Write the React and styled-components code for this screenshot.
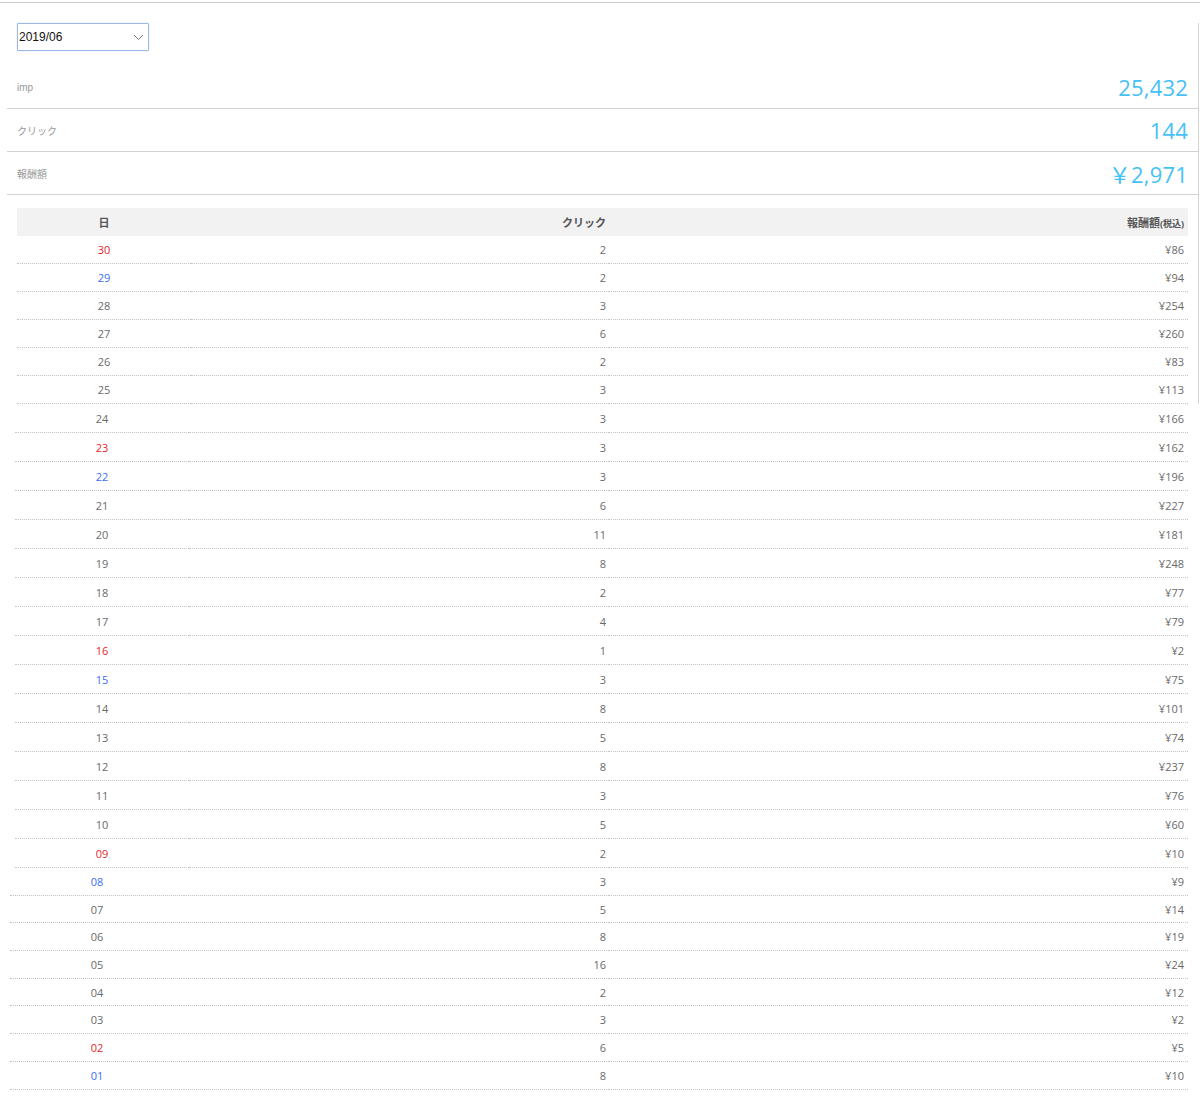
import React from "react";
import styled, { createGlobalStyle } from "styled-components";

const Global = createGlobalStyle`
  html, body { margin: 0; padding: 0; background: #fff; }
  body { font-family: "Open Sans", "Noto Sans CJK JP", sans-serif; color: #666; }
`;

const Page = styled.div`
  margin-top: 2px;
  border-top: 1px solid #cfcfcf;
  width: 1200px;
`;

const Upper = styled.div`
  margin-left: 7px;
  width: 1191px;
  border-right: 1px solid #d4d4d4;
`;

const SelectWrap = styled.label`
  position: relative;
  display: block;
  margin: 20px 0 0 10px;
  width: 132px;
  height: 28px;
  box-sizing: border-box;
`;

const Select = styled.select`
  appearance: none;
  width: 100%;
  height: 100%;
  box-sizing: border-box;
  border: 1px solid #9db9e6;
  border-radius: 1px;
  background: #fff;
  box-shadow: 0 0 2px rgba(120, 160, 220, 0.35);
  padding: 0 0 0 1px;
  font-family: "Liberation Sans", Arial, sans-serif;
  font-size: 12px;
  color: #111;
  outline: none;
`;

const Chevron = styled.svg`
  position: absolute;
  right: 5px;
  top: 11px;
  pointer-events: none;
`;

const Summary = styled.div`
  margin-top: 15px;
`;

const SummaryRow = styled.div`
  height: 42px;
  border-bottom: 1px solid #d2d2d2;
  display: flex;
  align-items: center;
  justify-content: space-between;
  padding: 0 10px;
`;

const SummaryLabel = styled.span`
  font-family: "Liberation Sans", "Noto Sans CJK JP", sans-serif;
  font-size: 10px;
  color: #999;
`;

const SummaryValue = styled.span`
  font-family: "Open Sans", "Noto Sans CJK JP", sans-serif;
  font-size: 22px;
  color: #45c1f6;
  letter-spacing: 0.2px;
`;

const TableHead = styled.div`
  margin: 13px 10px 0 10px;
  height: 28px;
  background: #f2f2f2;
  display: grid;
  grid-template-columns: 174px 1fr 579px;
  align-items: center;
  font-size: 11px;
  font-weight: 700;
  color: #555;
`;

const HeadCell = styled.div`
  text-align: ${(p) => p.$align || "right"};
  padding-right: ${(p) => (p.$align === "center" ? "0" : p.$pr || "3px")};
`;

const Small = styled.span`
  font-size: 9px;
`;

const Segment = styled.div`
  margin-left: ${(p) => p.$indent}px;
  width: ${(p) => 1188 - p.$indent - (p.$inUpper ? 7 : 0)}px;
`;

const Row = styled.div`
  display: grid;
  grid-template-columns: 174px 1fr 579px;
  height: ${(p) => p.$h}px;
`;

const Cell = styled.div`
  display: flex;
  align-items: center;
  justify-content: ${(p) => (p.$center ? "center" : "flex-end")};
  padding-right: ${(p) => (p.$center ? "0" : p.$pr || "3px")};
  border-bottom: 1px dotted #c4c4c4;
  font-size: 11px;
  color: ${(p) => (p.$tone === "red" ? "#e5252a" : p.$tone === "blue" ? "#3a6ff2" : "#6a6a6a")};
`;

const data = [
  ["30", 2, 86, "red"], ["29", 2, 94, "blue"], ["28", 3, 254], ["27", 6, 260],
  ["26", 2, 83], ["25", 3, 113], ["24", 3, 166], ["23", 3, 162, "red"],
  ["22", 3, 196, "blue"], ["21", 6, 227], ["20", 11, 181], ["19", 8, 248],
  ["18", 2, 77], ["17", 4, 79], ["16", 1, 2, "red"], ["15", 3, 75, "blue"],
  ["14", 8, 101], ["13", 5, 74], ["12", 8, 237], ["11", 3, 76],
  ["10", 5, 60], ["09", 2, 10, "red"], ["08", 3, 9, "blue"], ["07", 5, 14],
  ["06", 8, 19], ["05", 16, 24], ["04", 2, 12], ["03", 3, 2],
  ["02", 6, 5, "red"], ["01", 8, 10, "blue"],
];

const Rows = ({ items, h }) =>
  items.map(([d, c, y, tone]) => (
    <Row key={d} $h={h}>
      <Cell $center $tone={tone}>{d}</Cell>
      <Cell>{c}</Cell>
      <Cell $pr="4px">¥{y}</Cell>
    </Row>
  ));

export default function App() {
  return (
    <>
      <Global />
      <Page>
        <Upper>
          <SelectWrap>
            <Select defaultValue="2019/06">
              <option>2019/06</option>
              <option>2019/05</option>
            </Select>
            <Chevron width="11" height="7" viewBox="0 0 11 7">
              <path d="M1 1 L5.5 5.5 L10 1" fill="none" stroke="#777" strokeWidth="1" />
            </Chevron>
          </SelectWrap>
          <Summary>
            <SummaryRow>
              <SummaryLabel>imp</SummaryLabel>
              <SummaryValue>25,432</SummaryValue>
            </SummaryRow>
            <SummaryRow>
              <SummaryLabel>クリック</SummaryLabel>
              <SummaryValue>144</SummaryValue>
            </SummaryRow>
            <SummaryRow>
              <SummaryLabel>報酬額</SummaryLabel>
              <SummaryValue>￥2,971</SummaryValue>
            </SummaryRow>
          </Summary>
          <TableHead>
            <HeadCell $align="center">日</HeadCell>
            <HeadCell>クリック</HeadCell>
            <HeadCell $pr="4px">
              報酬額<Small>(税込)</Small>
            </HeadCell>
          </TableHead>
          <Segment $indent={10} $inUpper>
            <Rows items={data.slice(0, 6)} h={28} />
          </Segment>
        </Upper>
        <Segment $indent={15}>
          <Rows items={data.slice(6, 22)} h={29} />
        </Segment>
        <Segment $indent={10}>
          <Rows items={data.slice(22)} h={27.7} />
        </Segment>
      </Page>
    </>
  );
}
